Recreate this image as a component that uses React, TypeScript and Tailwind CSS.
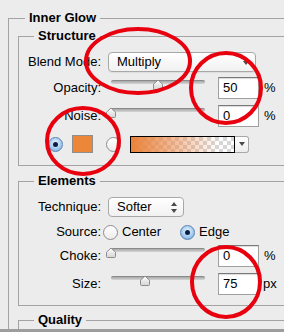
import type { ReactNode } from 'react'

function Label({ children }: { children: ReactNode }) {
  return <span className="w-[82px] shrink-0 text-right">{children}</span>
}

function Radio({ on }: { on?: boolean }) {
  return on ? (
    <span className="flex size-[15px] shrink-0 items-center justify-center rounded-full border border-[#5d84b0] bg-[radial-gradient(circle_at_50%_40%,#f2f9ff,#9cc8ee_60%,#5f9ad4)]">
      <span className="size-[5px] rounded-full bg-[#0b1f44]" />
    </span>
  ) : (
    <span className="size-[15px] shrink-0 rounded-full border border-[#8e8e8e] bg-linear-to-b from-white to-[#ececec]" />
  )
}

function Slider({ pos }: { pos: number }) {
  return (
    <div className="relative ml-[10px] h-full w-[94px] shrink-0">
      <div className="absolute left-0 right-0 top-[3px] h-[4px] rounded-full border-t border-[#8a8a8a] bg-linear-to-b from-[#a8a8a8] to-[#d6d6d6]" />
      <svg className="absolute top-[2px]" style={{ left: pos - 6 }} width="12" height="11" viewBox="0 0 12 11">
        <defs>
          <linearGradient id="th" x1="0" y1="0" x2="0" y2="1">
            <stop offset="0" stopColor="#ffffff" />
            <stop offset="1" stopColor="#d4d4d4" />
          </linearGradient>
        </defs>
        <path d="M1.5 9.5V5.2L6 1l4.5 4.2v4.3a1 1 0 0 1-1 1h-7a1 1 0 0 1-1-1z" fill="url(#th)" stroke="#8c8c8c" />
      </svg>
    </div>
  )
}

function NumBox({ value }: { value: string }) {
  return (
    <div className="ml-[13px] flex h-[22px] w-[41px] shrink-0 items-center border border-[#a0a0a0] border-t-[#7a7a7a] bg-white pl-[4px] shadow-[inset_0_1px_1px_rgba(0,0,0,0.15)]">
      {value}
    </div>
  )
}

function Legend({ children, inset }: { children: ReactNode; inset: string }) {
  return <legend className={`${inset} px-[4px] text-[13px] font-bold leading-[16px]`}>{children}</legend>
}

export default function App() {
  return (
    <div className="relative h-[332px] w-[284px] overflow-hidden border-b-[3px] border-[#9d9d9d] bg-[#ececec] font-['Liberation_Sans',Arial,sans-serif] text-[13px] leading-[16px] text-black">
      <fieldset className="ml-[8px] mt-[10px] h-[330px] w-[300px] border-l border-t border-[#a3a3a3]">
        <Legend inset="ml-[16px]">Inner Glow</Legend>
        <div className="pl-[9px]">
          {/* Structure */}
          <fieldset className="mt-[2px] w-[300px] border-y border-l border-[#a3a3a3]">
            <Legend inset="ml-[15px]">Structure</Legend>
            <div className="flex flex-col pb-[11px] pt-[8px]">
              <div className="flex h-[20px] items-center">
                <Label>Blend Mode:</Label>
                <div className="relative ml-[7px] flex h-[20px] w-[148px] items-center rounded-[4px] border border-[#a8a8a8] bg-linear-to-b from-white to-[#f1f1f1] pl-[8px] shadow-[0_1px_0_rgba(0,0,0,0.06)]">
                  Multiply
                  <svg className="absolute right-[6px] top-[8px]" width="6" height="4" viewBox="0 0 6 4">
                    <path d="M0 0h6L3 4z" fill="#4a4a4a" />
                  </svg>
                </div>
              </div>
              <div className="mt-[5px] flex h-[22px] items-center">
                <Label>Opacity:</Label>
                <Slider pos={47} />
                <NumBox value="50" />
                <span className="ml-[5px]">%</span>
              </div>
              <div className="mt-[6px] flex h-[22px] items-center">
                <Label>Noise:</Label>
                <Slider pos={0} />
                <NumBox value="0" />
                <span className="ml-[5px]">%</span>
              </div>
              <div className="mt-[7px] flex h-[20px] items-center">
                <span className="ml-[29px]" />
                <Radio on />
                <span className="ml-[9px] h-[18px] w-[21px] border border-[#8f8f8f] bg-[#ec873a]" />
                <span className="ml-[13px]" />
                <Radio />
                <div className="ml-[9px] h-[17px] w-[105px] border border-black bg-[conic-gradient(#d6d6d6_25%,#ffffff_0_50%,#d6d6d6_0_75%,#ffffff_0)] bg-size-[8px_8px]">
                  <div className="h-full w-full bg-[linear-gradient(to_right,#e9823a,rgba(236,140,80,0.55)_45%,rgba(255,255,255,0)_85%)]" />
                </div>
                <div className="flex h-[17px] w-[14px] items-center justify-center rounded-r-[3px] border border-l-0 border-[#a8a8a8] bg-linear-to-b from-white to-[#ededed]">
                  <svg width="6" height="4" viewBox="0 0 6 4">
                    <path d="M0 0h6L3 4z" fill="#4a4a4a" />
                  </svg>
                </div>
              </div>
            </div>
          </fieldset>

          {/* Elements */}
          <fieldset className="mt-[7px] w-[300px] border-y border-l border-[#a3a3a3]">
            <Legend inset="ml-[15px]">Elements</Legend>
            <div className="flex flex-col pb-[10px] pt-[8px]">
              <div className="flex h-[20px] items-center">
                <Label>Technique:</Label>
                <div className="relative ml-[7px] flex h-[20px] w-[76px] items-center rounded-[4px] border border-[#a8a8a8] bg-linear-to-b from-white to-[#f1f1f1] pl-[8px]">
                  Softer
                  <svg className="absolute right-[6px] top-[4px]" width="6" height="11" viewBox="0 0 6 11">
                    <path d="M3 0l3 4H0zM0 7h6l-3 4z" fill="#4a4a4a" />
                  </svg>
                </div>
              </div>
              <div className="mt-[7px] flex h-[16px] items-center">
                <Label>Source:</Label>
                <div className="ml-[2px] flex w-[77px] items-center">
                  <Radio />
                  <span className="ml-[4px]">Center</span>
                </div>
                <Radio on />
                <span className="ml-[4px]">Edge</span>
              </div>
              <div className="mt-[5px] flex h-[22px] items-center">
                <Label>Choke:</Label>
                <Slider pos={0} />
                <NumBox value="0" />
                <span className="ml-[5px]">%</span>
              </div>
              <div className="mt-[6px] flex h-[22px] items-center">
                <Label>Size:</Label>
                <Slider pos={34} />
                <NumBox value="75" />
                <span className="ml-[4px]">px</span>
              </div>
            </div>
          </fieldset>

          {/* Quality */}
          <fieldset className="mt-[6px] h-[40px] w-[300px] border-l border-t border-[#a3a3a3]">
            <Legend inset="ml-[15px]">Quality</Legend>
          </fieldset>
        </div>
      </fieldset>

      {/* red annotation marks */}
      <svg className="pointer-events-none absolute inset-0" width="284" height="332" viewBox="0 0 284 332">
        <g fill="none" stroke="#e8000e" strokeWidth="4">
          <ellipse cx="138" cy="61" rx="52" ry="32" />
          <ellipse cx="226" cy="88" rx="35" ry="35" />
          <ellipse cx="83" cy="141" rx="36" ry="33" />
          <ellipse cx="226" cy="282" rx="34" ry="35" />
        </g>
      </svg>
    </div>
  )
}
